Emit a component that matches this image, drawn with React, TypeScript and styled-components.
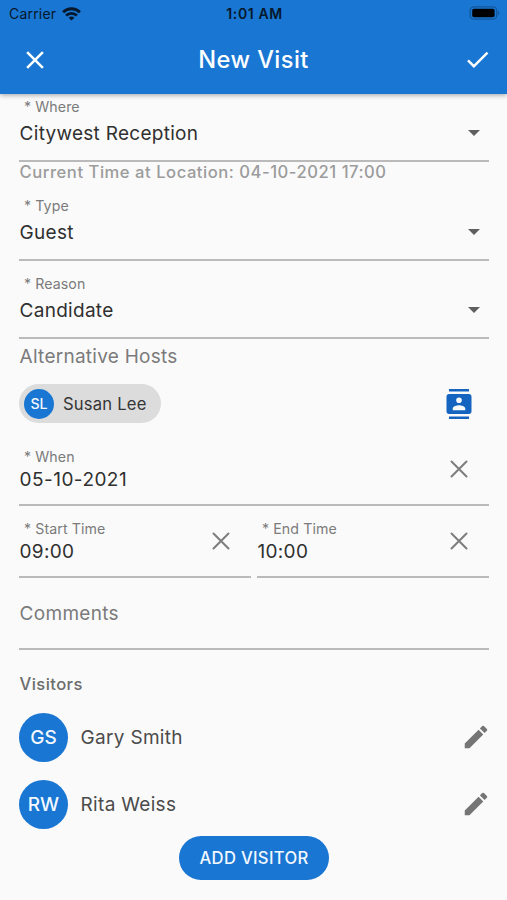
import React from "react";
import styled, { createGlobalStyle } from "styled-components";

const GlobalStyle = createGlobalStyle`
  * { box-sizing: border-box; }
  body {
    margin: 0;
    background: #fafafa;
    font-family: Inter, "Liberation Sans", sans-serif;
    overflow: hidden;
  }
  button { font-family: inherit; border: 0; padding: 0; background: none; }
  svg { display: block; flex: none; }
`;

const blue = "#1976d2";

const Screen = styled.main`
  width: 507px;
  height: 900px;
  background: #fafafa;
`;

const Header = styled.header`
  position: relative;
  height: 94px;
  background: ${blue};
  box-shadow: 0 1px 5px rgba(0, 0, 0, 0.36);
`;

const StatusBar = styled.div`
  display: grid;
  grid-template-columns: 1fr auto 1fr;
  align-items: center;
  height: 27px;
  padding: 0 7px 0 9px;
  color: #06182b;
`;

const Carrier = styled.div`
  display: flex;
  align-items: center;
  gap: 6px;
  font-size: 14px;
  line-height: 26px;
  letter-spacing: 0.2px;
`;

const Clock = styled.div`
  font-size: 14px;
  line-height: 26px;
  font-weight: 600;
  letter-spacing: 0.6px;
`;

const BatterySlot = styled.div`
  display: flex;
  justify-content: flex-end;
  padding-bottom: 1px;
`;

const TitleBar = styled.div`
  display: grid;
  grid-template-columns: 1fr auto 1fr;
  align-items: center;
  height: 66px;
  padding: 0 15px 0 20px;
`;

const Title = styled.h1`
  margin: 0 5px 0 0;
  color: #fff;
  font-size: 23.6px;
  line-height: 30px;
  font-weight: 500;
  letter-spacing: 0.45px;
`;

const IconButton = styled.button<{ $end?: boolean }>`
  display: flex;
  justify-self: ${(p) => (p.$end ? "end" : "start")};
  padding-bottom: ${(p) => (p.$end ? 2 : 0)}px;
  color: inherit;
`;

const Form = styled.form`
  display: flex;
  flex-direction: column;
  padding: 0 18px 0 19px;
`;

const FieldBox = styled.div<{ $top: number; $height: number }>`
  display: flex;
  align-items: flex-start;
  justify-content: space-between;
  margin-top: ${(p) => p.$top}px;
  height: ${(p) => p.$height}px;
  border-bottom: 2px solid #bababa;
`;

const FieldText = styled.div<{ $gap: number; $drop?: number }>`
  display: flex;
  flex-direction: column;
  gap: ${(p) => p.$gap}px;
  padding: ${(p) => p.$drop ?? 0}px 0 0 0.6px;
`;

const Label = styled.label`
  padding-left: 4.4px;
  color: #7b7b7b;
  font-size: 14.2px;
  line-height: 18px;
  letter-spacing: 0.08px;
  white-space: pre;
`;

const Value = styled.div<{ $spacing?: number }>`
  color: #303030;
  font-size: 19px;
  line-height: 24px;
  letter-spacing: ${(p) => p.$spacing ?? 0.28}px;
  white-space: pre;
`;

const Affix = styled.div<{ $top: number; $right: number }>`
  padding: ${(p) => `${p.$top}px ${p.$right}px 0 0`};
  color: #757575;
`;

const Helper = styled.p`
  margin: 0 0 0 0.6px;
  color: #9c9c9c;
  font-size: 16.6px;
  line-height: 20px;
  font-weight: 500;
  letter-spacing: 0.53px;
`;

const TimeRow = styled.div`
  display: grid;
  grid-template-columns: 232px 232px;
  justify-content: space-between;
`;

const GroupLabel = styled.div`
  margin: 6px 0 0 0.6px;
  color: #7b7b7b;
  font-size: 19px;
  line-height: 24px;
  letter-spacing: 0.26px;
`;

const HostRow = styled.div`
  display: flex;
  align-items: center;
  justify-content: space-between;
  height: 39px;
  margin-top: 15px;
  padding-right: 15px;
`;

const Chip = styled.div`
  display: flex;
  align-items: center;
  width: 142px;
  height: 39px;
  padding-left: 5px;
  gap: 9px;
  border-radius: 20px;
  background: #dcdcdc;
  color: #353535;
  font-size: 16.6px;
  letter-spacing: 0.2px;
  white-space: nowrap;
`;

const Avatar = styled.span<{ $size: number; $font: number }>`
  display: flex;
  flex: none;
  align-items: center;
  justify-content: center;
  width: ${(p) => p.$size}px;
  height: ${(p) => p.$size}px;
  border-radius: 50%;
  background: ${blue};
  color: #f2f8fe;
  font-size: ${(p) => p.$font}px;
  font-weight: 500;
  letter-spacing: 0;
`;

const Comments = styled.div`
  height: 72px;
  padding: 24px 0 0 0.6px;
  border-bottom: 2px solid #bababa;
  color: #7b7b7b;
  font-size: 19px;
  line-height: 24px;
  letter-spacing: 0.3px;
`;

const VisitorsTitle = styled.h2`
  margin: 24px 0 0 0.6px;
  color: #6c6c6c;
  font-size: 16.6px;
  line-height: 20px;
  font-weight: 500;
  letter-spacing: 0.4px;
`;

const VisitorList = styled.div`
  display: flex;
  flex-direction: column;
  gap: 18px;
  margin-top: 19px;
`;

const Visitor = styled.div`
  display: flex;
  align-items: center;
  height: 49px;
  margin-right: -2px;
`;

const VisitorName = styled.span`
  flex: 1;
  padding-left: 12.6px;
  color: #4b4b4b;
  font-size: 19px;
  letter-spacing: 0.3px;
`;

const AddButton = styled.button`
  align-self: center;
  width: 150px;
  height: 44px;
  margin-top: 7px;
  border-radius: 22px;
  background: ${blue};
  color: #f2f8fe;
  font-size: 16.6px;
  font-weight: 500;
  letter-spacing: 0.32px;
  white-space: nowrap;
`;

const EditButton = styled.button`
  display: flex;
  padding-bottom: 1px;
`;

const Glyph = ({ d, size = 29, color }: { d: string; size?: number; color: string }) => (
  <svg width={size} height={size} viewBox="0 0 24 24" fill={color}>
    <path d={d} />
  </svg>
);

const closePath =
  "M19 6.41 17.59 5 12 10.59 6.41 5 5 6.41 10.59 12 5 17.59 6.41 19 12 13.41 17.59 19 19 17.59 13.41 12z";
const checkPath = "M9 16.17 4.83 12l-1.42 1.41L9 19 21 7l-1.41-1.41z";
const editPath =
  "M3 17.25V21h3.75L17.81 9.94l-3.75-3.75L3 17.25zM20.71 7.04a1 1 0 0 0 0-1.41l-2.34-2.34a1 1 0 0 0-1.41 0l-1.83 1.83 3.75 3.75 1.83-1.83z";
const contactsPath =
  "M20 0H4v2h16V0zM4 24h16v-2H4v2zM20 4H4c-1.1 0-2 .9-2 2v12c0 1.1.9 2 2 2h16c1.1 0 2-.9 2-2V6c0-1.1-.9-2-2-2zm-8 2.75a2.25 2.25 0 1 1 0 4.5 2.25 2.25 0 0 1 0-4.5zM17 17H7v-1.5c0-1.67 3.33-2.5 5-2.5s5 .83 5 2.5V17z";

const CrossIcon = ({ size, color, weight }: { size: number; color: string; weight: number }) => (
  <svg width={size} height={size} viewBox="0 0 18 18" stroke={color} strokeWidth={weight} strokeLinecap="round">
    <path d="M1.5 1.5 16.5 16.5M16.5 1.5 1.5 16.5" />
  </svg>
);

const WifiIcon = () => (
  <svg width="19" height="14" viewBox="0 0 19 14" fill="none" stroke="#06182b" strokeWidth="2.8">
    <path d="M1.1 5.2a12 12 0 0 1 16.8 0" />
    <path d="M4.1 8.5a7.7 7.7 0 0 1 10.8 0" />
    <path d="M9.5 13.6 6.6 10.8a4 4 0 0 1 5.8 0z" fill="#06182b" stroke="none" />
  </svg>
);

const BatteryIcon = () => (
  <svg width="31" height="14" viewBox="0 0 31 14">
    <rect x="1.2" y="0.8" width="26.5" height="12.4" rx="3.8" fill="none" stroke="#12569a" strokeWidth="1.3" />
    <rect x="3.2" y="2.7" width="22.4" height="8.6" rx="1.8" fill="#000" />
    <path d="M29 4.8c1.7.8 1.7 3.6 0 4.4z" fill="#12569a" />
  </svg>
);

const SelectField = ({ label, value, top }: { label: string; value: string; top: number }) => (
  <FieldBox $top={top} $height={64}>
    <FieldText $gap={6}>
      <Label>* {label}</Label>
      <Value>{value}</Value>
    </FieldText>
    <Affix $top={32} $right={9}>
      <svg width="12" height="6" viewBox="0 0 12 6" fill="#5f5f5f">
        <path d="M0 0h12L6 6z" />
      </svg>
    </Affix>
  </FieldBox>
);

const ClearableField = ({ label, value, top, spacing }: { label: string; value: string; top: number; spacing?: number }) => (
  <FieldBox $top={top} $height={59}>
    <FieldText $gap={2} $drop={1}>
      <Label>* {label}</Label>
      <Value $spacing={spacing}>{value}</Value>
    </FieldText>
    <Affix $top={13} $right={20.6}>
      <CrossIcon size={18} color="#7d7d7d" weight={2} />
    </Affix>
  </FieldBox>
);

const visitors = [
  { initials: "GS", name: "Gary Smith" },
  { initials: "RW", name: "Rita Weiss" },
];

export default function App() {
  return (
    <Screen>
      <GlobalStyle />
      <Header>
        <StatusBar>
          <Carrier>
            Carrier
            <WifiIcon />
          </Carrier>
          <Clock>1:01 AM</Clock>
          <BatterySlot>
            <BatteryIcon />
          </BatterySlot>
        </StatusBar>
        <TitleBar>
          <IconButton type="button" aria-label="Close">
            <Glyph size={30} color="#fff" d={closePath} />
          </IconButton>
          <Title>New Visit</Title>
          <IconButton type="button" aria-label="Save" $end>
            <Glyph color="#fff" d={checkPath} />
          </IconButton>
        </TitleBar>
      </Header>
      <Form>
        <SelectField label="Where" value="Citywest Reception" top={4} />
        <Helper>Current Time at Location: 04-10-2021 17:00</Helper>
        <SelectField label="Type" value="Guest" top={15} />
        <SelectField label="Reason" value="Candidate" top={14} />
        <GroupLabel>Alternative Hosts</GroupLabel>
        <HostRow>
          <Chip>
            <Avatar $size={30} $font={14.2}>SL</Avatar>
            Susan Lee
          </Chip>
          <Glyph size={30} color="#1565c0" d={contactsPath} />
        </HostRow>
        <ClearableField label="When" value="05-10-2021" top={24} spacing={0.45} />
        <TimeRow>
          <ClearableField label="Start Time" value="09:00" top={13} />
          <ClearableField label="End Time" value="10:00" top={13} />
        </TimeRow>
        <Comments>Comments</Comments>
        <VisitorsTitle>Visitors</VisitorsTitle>
        <VisitorList>
          {visitors.map((v) => (
            <Visitor key={v.name}>
              <Avatar $size={49} $font={19}>{v.initials}</Avatar>
              <VisitorName>{v.name}</VisitorName>
              <EditButton type="button" aria-label="Edit">
                <Glyph size={30} color="#757575" d={editPath} />
              </EditButton>
            </Visitor>
          ))}
        </VisitorList>
        <AddButton type="button">ADD VISITOR</AddButton>
      </Form>
    </Screen>
  );
}
